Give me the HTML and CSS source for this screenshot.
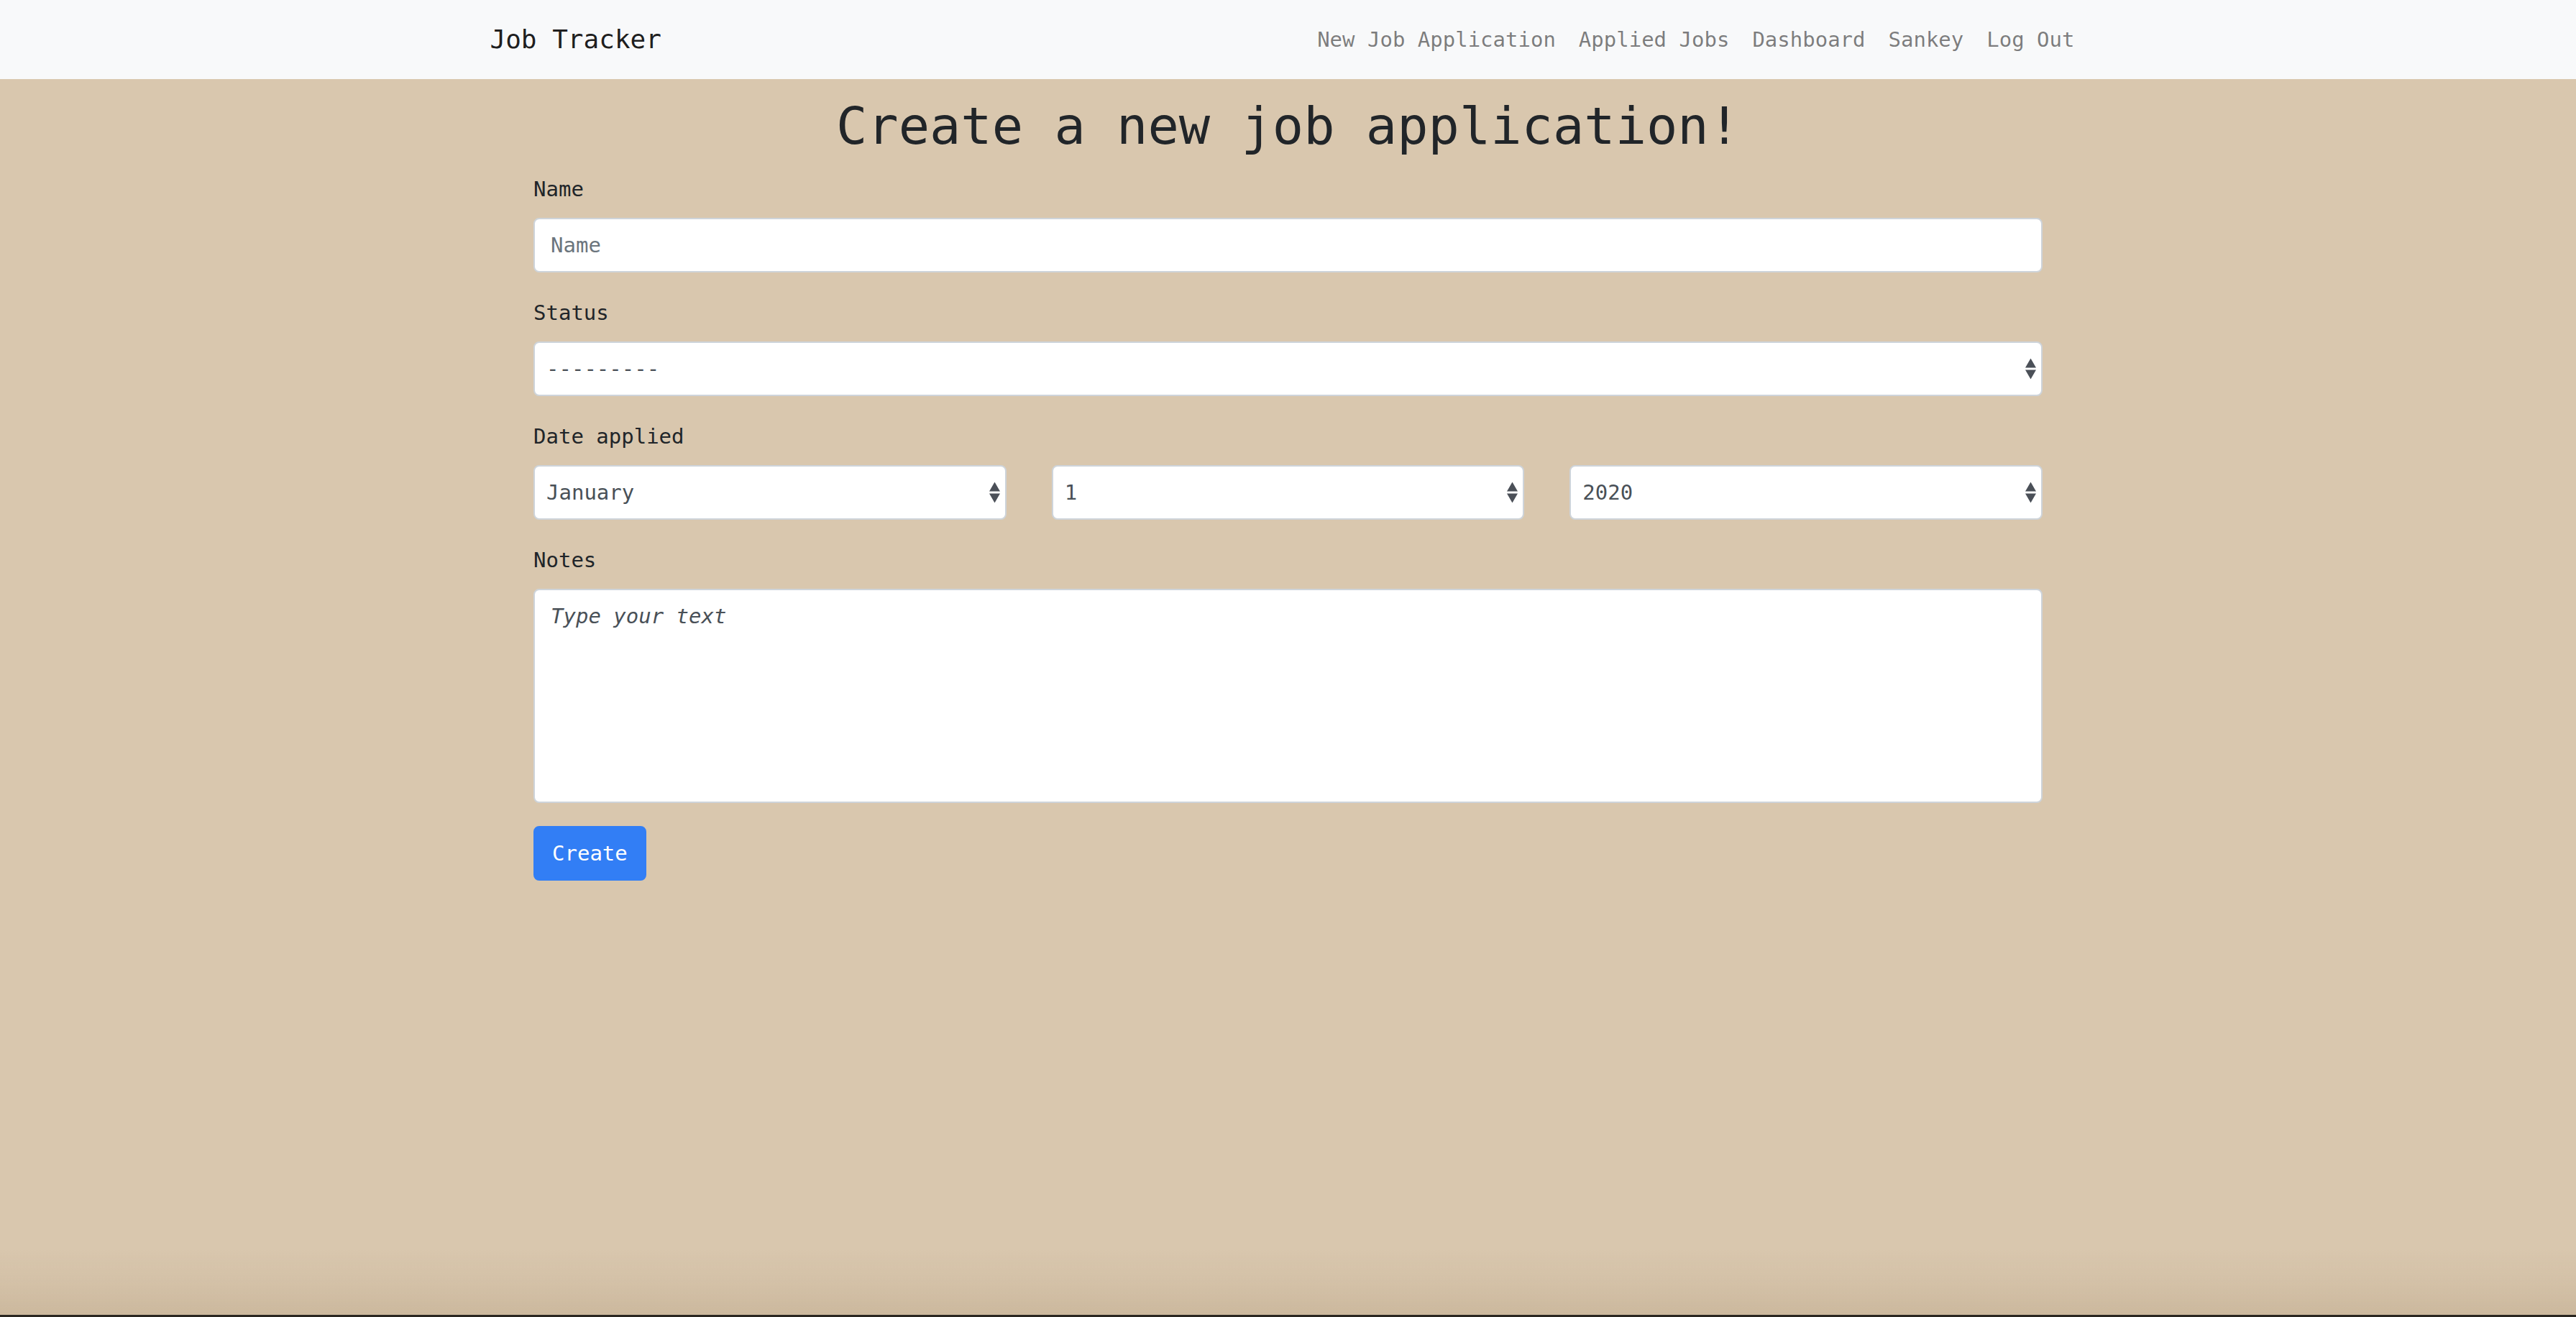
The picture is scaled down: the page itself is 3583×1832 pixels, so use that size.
FILE: index.html
```html
<!DOCTYPE html>
<html lang="en">
<head>
<meta charset="utf-8">
<title>Job Tracker</title>
<link rel="stylesheet" href="styles.css">
</head>
<body>
<nav class="navbar">
  <div class="nav-inner">
    <a class="brand" href="#">Job Tracker</a>
    <ul class="nav-links">
      <li><a href="#">New Job Application</a></li>
      <li><a href="#">Applied Jobs</a></li>
      <li><a href="#">Dashboard</a></li>
      <li><a href="#">Sankey</a></li>
      <li><a href="#">Log Out</a></li>
    </ul>
  </div>
</nav>
<main class="page">
  <h1 class="title">Create a new job application!</h1>
  <form class="form">
    <div class="group">
      <label class="label" for="name">Name</label>
      <input class="control" id="name" type="text" placeholder="Name">
    </div>
    <div class="group">
      <label class="label" for="status">Status</label>
      <div class="select-wrap">
        <select class="control select" id="status">
          <option>---------</option>
        </select>
        <svg class="arrows" width="15" height="29" viewBox="0 0 15 29"><path d="M0 13 L7.5 0 L15 13 Z M0 16 L15 16 L7.5 29 Z" fill="#4b5058"/></svg>
      </div>
    </div>
    <div class="group">
      <label class="label" for="month">Date applied</label>
      <div class="date-row">
        <div class="select-wrap">
          <select class="control select" id="month"><option>January</option></select>
          <svg class="arrows" width="15" height="29" viewBox="0 0 15 29"><path d="M0 13 L7.5 0 L15 13 Z M0 16 L15 16 L7.5 29 Z" fill="#4b5058"/></svg>
        </div>
        <div class="select-wrap">
          <select class="control select"><option>1</option></select>
          <svg class="arrows" width="15" height="29" viewBox="0 0 15 29"><path d="M0 13 L7.5 0 L15 13 Z M0 16 L15 16 L7.5 29 Z" fill="#4b5058"/></svg>
        </div>
        <div class="select-wrap">
          <select class="control select"><option>2020</option></select>
          <svg class="arrows" width="15" height="29" viewBox="0 0 15 29"><path d="M0 13 L7.5 0 L15 13 Z M0 16 L15 16 L7.5 29 Z" fill="#4b5058"/></svg>
        </div>
      </div>
    </div>
    <div class="group">
      <label class="label" for="notes">Notes</label>
      <textarea class="control notes" id="notes" placeholder="Type your text"></textarea>
    </div>
    <button class="btn" type="button">Create</button>
  </form>
</main>
<div class="window-edge"></div>
</body>
</html>
```

FILE: styles.css
```css
* { box-sizing: border-box; }
html, body {
  margin: 0;
  padding: 0;
  background: #d9c7ae;
  font-family: "DejaVu Sans Mono", "Liberation Mono", monospace;
  color: #212529;
}
body {
  min-height: 100vh;
}
.navbar {
  background: #f8f9fa;
  height: 110px;
}
.nav-inner {
  max-width: 2280px;
  margin: 0 auto;
  padding: 0 30px;
  height: 110px;
  display: flex;
  align-items: center;
  justify-content: space-between;
}
.brand {
  font-size: 36px;
  line-height: 60px;
  color: rgba(0, 0, 0, 0.9);
  text-decoration: none;
}
.nav-links {
  list-style: none;
  margin: 0;
  padding: 0;
  display: flex;
}
.nav-links a {
  display: block;
  padding: 0 16px;
  font-size: 29px;
  line-height: 48px;
  color: rgba(0, 0, 0, 0.5);
  text-decoration: none;
}
.page {
  display: flex;
  flex-direction: column;
  align-items: center;
}
.title {
  margin: 22px 0 20px;
  font-size: 72px;
  line-height: 87px;
  font-weight: 400;
  color: #212529;
  text-align: center;
}
.form {
  width: 2099px;
}
.group {
  margin-bottom: 32px;
}
.label {
  display: block;
  font-size: 29px;
  line-height: 48px;
  margin-bottom: 16px;
  color: #212529;
}
.control {
  display: block;
  width: 100%;
  height: 76px;
  padding: 0 22px;
  font-family: "DejaVu Sans Mono", "Liberation Mono", monospace;
  font-size: 29px;
  line-height: 48px;
  color: #495057;
  background: #fff;
  border: 2px solid #ced4da;
  border-radius: 8px;
  outline: none;
}
.control::placeholder {
  color: #6c757d;
  opacity: 1;
}
.select-wrap {
  position: relative;
}
.select {
  appearance: none;
  -webkit-appearance: none;
  padding: 0 40px 0 16px;
}
.arrows {
  position: absolute;
  right: 9px;
  top: 50%;
  transform: translateY(-50%);
  pointer-events: none;
}
.date-row {
  display: grid;
  grid-template-columns: repeat(3, 1fr);
  column-gap: 63px;
}
.notes {
  height: 298px;
  padding: 12px 22px;
  resize: none;
}
.notes::placeholder {
  font-style: italic;
  color: #495057;
}
.btn {
  display: block;
  height: 76px;
  padding: 0 24px;
  font-family: "DejaVu Sans Mono", "Liberation Mono", monospace;
  font-size: 29px;
  line-height: 48px;
  color: #fff;
  background: #327ef5;
  border: 2px solid #327ef5;
  border-radius: 8px;
  cursor: pointer;
}
.window-edge {
  position: fixed;
  left: 0;
  right: 0;
  bottom: 0;
  height: 95px;
  pointer-events: none;
  border-bottom: 3px solid #2a2620;
  background: linear-gradient(to bottom, rgba(120, 90, 50, 0) 0%, rgba(120, 90, 50, 0.05) 50%, rgba(110, 80, 40, 0.12) 100%);
}
```
